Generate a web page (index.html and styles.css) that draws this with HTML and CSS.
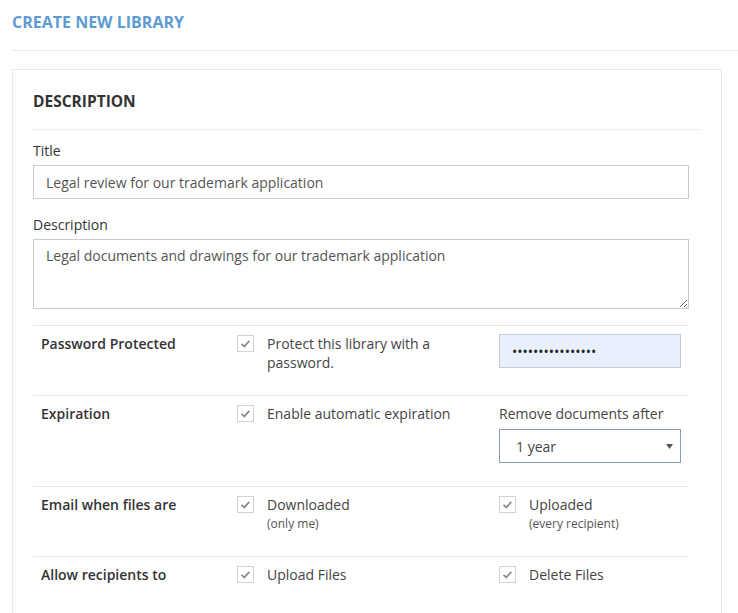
FILE: index.html
```html
<!DOCTYPE html>
<html lang="en">
<head>
<meta charset="utf-8">
<title>Create New Library</title>
<link rel="stylesheet" href="styles.css">
</head>
<body>
<header class="page-header">
  <h1 class="page-title">CREATE NEW LIBRARY</h1>
</header>
<section class="panel">
  <div class="panel-head">
    <h2 class="panel-title">DESCRIPTION</h2>
  </div>
  <form class="form">
    <div class="group">
      <label class="label" for="title">Title</label>
      <input class="input" id="title" type="text" value="Legal review for our trademark application">
    </div>
    <div class="group group-last">
      <label class="label" for="desc">Description</label>
      <textarea class="textarea" id="desc">Legal documents and drawings for our trademark application</textarea>
    </div>

    <div class="row">
      <div class="cell cell-label">Password Protected</div>
      <div class="cell">
        <div class="check">
          <span class="box"><svg width="17" height="17" viewBox="0 0 17 17"><polyline points="4.5,8.8 7.3,11.4 12.3,5.8" fill="none" stroke="#8c8c8c" stroke-width="1.8"/></svg></span>
          <div class="check-text">Protect this library with a password.</div>
        </div>
      </div>
      <div class="cell">
        <input class="input input-pass" type="password" value="abcdefghijklmnop">
      </div>
    </div>

    <div class="row">
      <div class="cell cell-label">Expiration</div>
      <div class="cell">
        <div class="check">
          <span class="box"><svg width="17" height="17" viewBox="0 0 17 17"><polyline points="4.5,8.8 7.3,11.4 12.3,5.8" fill="none" stroke="#8c8c8c" stroke-width="1.8"/></svg></span>
          <div class="check-text">Enable automatic expiration</div>
        </div>
      </div>
      <div class="cell">
        <div class="sub-label">Remove documents after</div>
        <div class="select">
          <span>1 year</span>
          <svg class="caret" width="7" height="5" viewBox="0 0 7 5"><polygon points="0,0 7,0 3.5,5" fill="#555"/></svg>
        </div>
      </div>
    </div>

    <div class="row">
      <div class="cell cell-label">Email when files are</div>
      <div class="cell">
        <div class="check">
          <span class="box"><svg width="17" height="17" viewBox="0 0 17 17"><polyline points="4.5,8.8 7.3,11.4 12.3,5.8" fill="none" stroke="#8c8c8c" stroke-width="1.8"/></svg></span>
          <div class="check-text">Downloaded<div class="small">(only me)</div></div>
        </div>
      </div>
      <div class="cell">
        <div class="check">
          <span class="box"><svg width="17" height="17" viewBox="0 0 17 17"><polyline points="4.5,8.8 7.3,11.4 12.3,5.8" fill="none" stroke="#8c8c8c" stroke-width="1.8"/></svg></span>
          <div class="check-text">Uploaded<div class="small">(every recipient)</div></div>
        </div>
      </div>
    </div>

    <div class="row">
      <div class="cell cell-label">Allow recipients to</div>
      <div class="cell">
        <div class="check">
          <span class="box"><svg width="17" height="17" viewBox="0 0 17 17"><polyline points="4.5,8.8 7.3,11.4 12.3,5.8" fill="none" stroke="#8c8c8c" stroke-width="1.8"/></svg></span>
          <div class="check-text">Upload Files</div>
        </div>
      </div>
      <div class="cell cell-last">
        <div class="check">
          <span class="box"><svg width="17" height="17" viewBox="0 0 17 17"><polyline points="4.5,8.8 7.3,11.4 12.3,5.8" fill="none" stroke="#8c8c8c" stroke-width="1.8"/></svg></span>
          <div class="check-text">Delete Files</div>
        </div>
      </div>
    </div>
  </form>
</section>
</body>
</html>
```

FILE: styles.css
```css
* { box-sizing: border-box; }

html, body {
  margin: 0;
  padding: 0;
  background: #ffffff;
}

body {
  font-family: "Open Sans", "DejaVu Sans", sans-serif;
  font-size: 14px;
  line-height: 20px;
  color: #333333;
  overflow: hidden;
  height: 613px;
  display: flex;
  flex-direction: column;
}

.page-header {
  flex: none;
  margin-left: 12px;
  padding: 11px 0 17px;
  border-bottom: 1px solid #ebebeb;
}

.page-title {
  margin: 0;
  font-size: 16px;
  line-height: 22px;
  font-weight: 700;
  color: #5f9bd3;
}

.panel {
  flex: 1;
  margin: 18px 16px 0 12px;
  border: 1px solid #e6e9ed;
  border-bottom: none;
}

.panel-head {
  margin: 0 20px;
  padding: 21px 0 18px;
  border-bottom: 1px solid #ececec;
}

.panel-title {
  margin: 0;
  font-size: 15.5px;
  line-height: 20px;
  font-weight: 700;
  color: #333333;
}

.form {
  padding: 11px 32px 0 20px;
}

.group {
  margin-bottom: 16px;
}

.label {
  display: block;
  margin-bottom: 4px;
  color: #333333;
}

.input {
  display: block;
  width: 100%;
  height: 34px;
  padding: 0 12px;
  border: 1px solid #c6ccd5;
  border-radius: 0;
  font-family: "Open Sans", "DejaVu Sans", sans-serif;
  font-size: 14px;
  color: #555555;
  background: #ffffff;
  outline: none;
}

.textarea {
  display: block;
  width: 100%;
  height: 70px;
  padding: 6px 12px;
  border: 1px solid #c6ccd5;
  border-radius: 0;
  font-family: "Open Sans", "DejaVu Sans", sans-serif;
  font-size: 14px;
  line-height: 20px;
  color: #555555;
  resize: vertical;
  outline: none;
}

.row {
  display: grid;
  grid-template-columns: 196px 262px 1fr;
  border-top: 1px solid #e5e9ee;
  line-height: 19px;
}

.cell {
  padding: 8px 8px 23px;
}

.cell-label {
  font-weight: 600;
  color: #333333;
}

.check {
  display: flex;
  align-items: flex-start;
}

.box {
  flex: none;
  width: 17px;
  height: 17px;
  margin: 1px 13px 0 0;
  border: 1px solid #d2d2d2;
  background: #ffffff;
  position: relative;
}

.box svg {
  position: absolute;
  left: -1px;
  top: -1px;
}

.check-text {
  color: #444444;
}

.small {
  font-size: 12px;
  color: #555555;
}

.input-pass {
  background: #e8f0fe;
  color: #222222;
  letter-spacing: 0;
}

.sub-label {
  color: #444444;
  margin-bottom: 6px;
}

.select {
  display: flex;
  align-items: center;
  justify-content: space-between;
  height: 34px;
  padding: 0 7px 0 16px;
  border: 1px solid #8d9bb0;
  color: #444444;
  font-size: 14px;
}

.caret {
  display: block;
}
```
